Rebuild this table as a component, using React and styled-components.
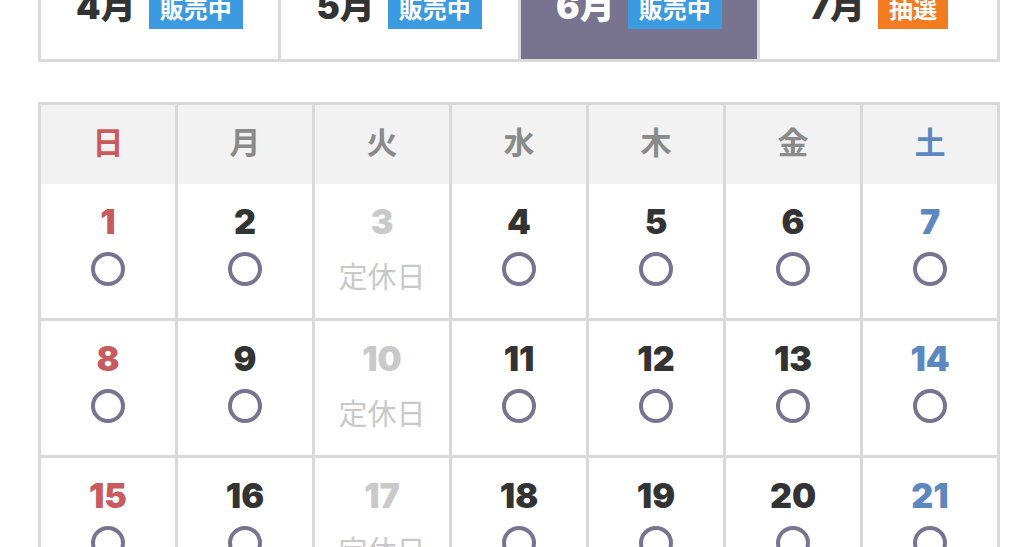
import React from "react"
import styled, { createGlobalStyle } from 'styled-components';

const GlobalStyle = createGlobalStyle`
  html, body {
    margin: 0;
    padding: 0;
    background: #fff;
    overflow: hidden;
  }
  body {
    font-family: Inter, "Noto Sans CJK JP", sans-serif;
  }
`

const months = [
  { label: "4", badge: "販売中", kind: "sale" },
  { label: "5", badge: "販売中", kind: "sale" },
  { label: "6", badge: "販売中", kind: "sale", active: true },
  { label: "7", badge: "抽選", kind: "lottery" },
]

const weekdays = ["日", "月", "火", "水", "木", "金", "土"]

// June: starts on Sunday, Tuesdays are closed
const days = Array.from({ length: 30 }, (_, i) => i + 1)

function dayTone(day) {
  const col = (day - 1) % 7
  if (col === 2) return "closed"
  if (col === 0) return "sun"
  if (col === 6) return "sat"
  return "normal"
}

function App() {
  return (
    <Page>
      <GlobalStyle />
      <Tabs>
        {months.map(m => (
          <Tab key={m.label} $active={m.active}>
            <MonthLabel $active={m.active}>{m.label}月</MonthLabel>
            <Badge $kind={m.kind}>{m.badge}</Badge>
          </Tab>
        ))}
      </Tabs>

      <Calendar>
        <HeadRow>
          {weekdays.map((w, i) => (
            <HeadCell key={w} $tone={i === 0 ? "sun" : i === 6 ? "sat" : "normal"}>{w}</HeadCell>
          ))}
        </HeadRow>
        <Body>
          {days.map(d => {
            const tone = dayTone(d)
            return (
              <DayCell key={d}>
                <DayNum $tone={tone}>{d}</DayNum>
                {tone === "closed" ? <Closed>定休日</Closed> : <Mark />}
              </DayCell>
            )
          })}
          <DayCell />
          <DayCell />
          <DayCell />
          <DayCell />
          <DayCell />
        </Body>
      </Calendar>
    </Page>
  )
}

const Page = styled.div`
  margin-top: -48px;
  padding: 0 24px 40px 38px;
  width: 962px;
`

const Tabs = styled.div`
  display: grid;
  grid-template-columns: repeat(4, 1fr);
  gap: 3px;
  background: #d9d9d9;
  border: 3px solid #d9d9d9;
`

const Tab = styled.div`
  height: 104px;
  display: flex;
  align-items: center;
  justify-content: center;
  gap: 13px;
  background: ${p => p.$active ? "#78738f" : "#fff"};
`

const MonthLabel = styled.span`
  margin-bottom: 8px;
  font-family: Inter, "Noto Sans CJK JP", sans-serif;
  font-size: 35px;
  font-weight: 900;
  color: ${p => p.$active ? "#fff" : "#333"};
`

const Badge = styled.span`
  font-family: "Noto Sans CJK JP", sans-serif;
  font-size: 24px;
  font-weight: 700;
  line-height: 31px;
  padding: 6px 11px;
  color: #fff;
  background: ${p => p.$kind === "lottery" ? "#f47c20" : "#3c9be0"};
`

const Calendar = styled.div`
  margin-top: 40px;
  border: 3px solid #d9d9d9;
  background: #d9d9d9;
`

const HeadRow = styled.div`
  display: grid;
  grid-template-columns: repeat(7, 1fr);
  column-gap: 3px;
`

const toneColor = {
  sun: "#c95a5d",
  sat: "#5d88bf",
  normal: "#333",
  closed: "#c9c9c9",
}

const HeadCell = styled.div`
  height: 79px;
  padding-bottom: 8px;
  box-sizing: border-box;
  background: #f2f2f2;
  display: flex;
  align-items: center;
  justify-content: center;
  font-family: "Noto Sans CJK JP", sans-serif;
  font-size: 31px;
  font-weight: 700;
  color: ${p => p.$tone === "normal" ? "#8a8a8a" : toneColor[p.$tone]};
`

const Body = styled.div`
  display: grid;
  grid-template-columns: repeat(7, 1fr);
  grid-auto-rows: 134px;
  gap: 3px;
`

const DayCell = styled.div`
  background: #fff;
  display: flex;
  flex-direction: column;
  align-items: center;
  padding-top: 18px;
  box-sizing: border-box;
`

const DayNum = styled.div`
  font-family: Inter, sans-serif;
  font-size: 34px;
  font-weight: 900;
  line-height: 40px;
  color: ${p => toneColor[p.$tone]};
`

const Mark = styled.div`
  margin-top: 10px;
  width: 34px;
  height: 34px;
  box-sizing: border-box;
  border: 4px solid #787390;
  border-radius: 50%;
`

const Closed = styled.div`
  margin-top: 16px;
  font-family: "Noto Sans CJK JP", sans-serif;
  font-size: 29px;
  line-height: 35px;
  color: #c9c9c9;
`

export default App;
